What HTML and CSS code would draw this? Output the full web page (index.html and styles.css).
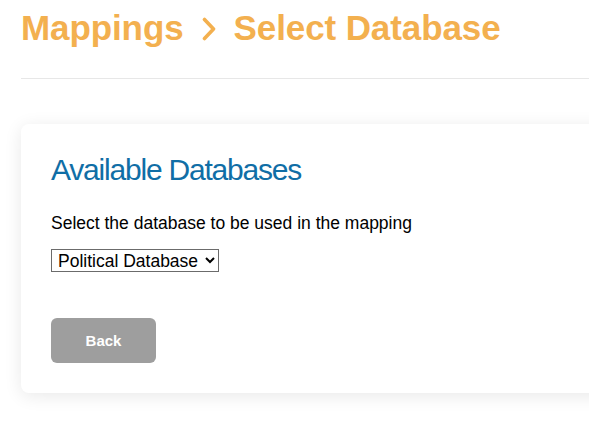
FILE: index.html
```html
<!DOCTYPE html>
<html lang="en">
<head>
<meta charset="utf-8">
<title>Select Database</title>
<link rel="stylesheet" href="styles.css">
</head>
<body>
<main class="page">
  <h1 class="crumbs">
    <span>Mappings</span>
    <svg class="chev" width="14" height="24" viewBox="0 0 14 24" aria-hidden="true"><path d="M2.5 2.5 L11.5 12 L2.5 21.5" fill="none" stroke="currentColor" stroke-width="3.6" stroke-linecap="round" stroke-linejoin="round"/></svg>
    <span>Select Database</span>
  </h1>
  <hr class="rule">
  <section class="card">
    <h2 class="card-title">Available Databases</h2>
    <p class="hint">Select the database to be used in the mapping</p>
    <select class="db-select">
      <option>Political Database</option>
    </select>
    <div class="actions">
      <button class="btn-back" type="button">Back</button>
    </div>
  </section>
</main>
</body>
</html>
```
FILE: styles.css
```css
html, body {
  margin: 0;
  padding: 0;
  overflow: hidden;
  background: #ffffff;
}
body {
  font-family: "Liberation Sans", Arial, sans-serif;
  color: #000;
}
.page {
  padding: 0 0 40px 21px;
}
.crumbs {
  margin: 0;
  padding-top: 8px;
  display: flex;
  align-items: center;
  gap: 18px;
  font-size: 35px;
  line-height: 40px;
  font-weight: 700;
  color: #f3b04f;
  white-space: nowrap;
  letter-spacing: -0.1px;
}
.chev {
  display: block;
  margin-top: 2px;
}
.rule {
  margin: 30px 0 0 0;
  border: 0;
  border-top: 1px solid #e7e7e7;
  height: 0;
}
.card {
  margin: 45px -30px 0 0;
  padding: 28px 30px 30px 30px;
  background: #fff;
  border-radius: 8px;
  box-shadow: 0 3px 18px rgba(0, 0, 0, 0.09);
}
.card-title {
  margin: 0;
  font-size: 30px;
  line-height: 36px;
  font-weight: 400;
  color: #106ea6;
  letter-spacing: -1.2px;
}
.hint {
  margin: 25px 0 0 0;
  font-size: 17.5px;
  line-height: 20px;
}
.db-select {
  display: block;
  margin-top: 16px;
  height: 23px;
  font-family: "Liberation Sans", Arial, sans-serif;
  font-size: 17.5px;
  color: #000;
  background: #fff;
  border: 1px solid #6b6b6b;
  border-radius: 0;
  padding: 0 3px 0 2px;
}
.actions {
  margin-top: 46px;
}
.btn-back {
  width: 105px;
  height: 45px;
  border: 0;
  border-radius: 6px;
  background: #9e9e9e;
  color: #fff;
  font-family: "Liberation Sans", Arial, sans-serif;
  font-weight: 700;
  font-size: 15px;
  display: block;
}
```
